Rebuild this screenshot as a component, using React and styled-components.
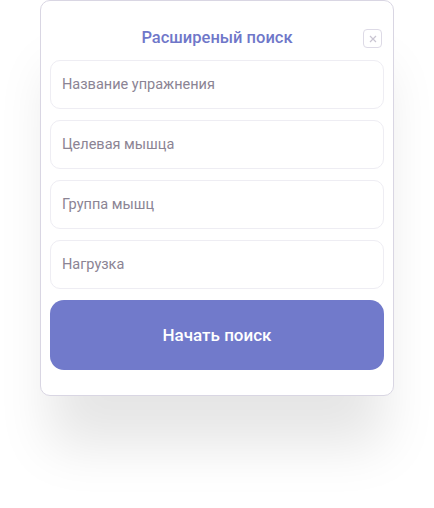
import React from 'react';
import styled, { createGlobalStyle } from 'styled-components';

const GlobalStyle = createGlobalStyle`
  html, body {
    margin: 0;
    padding: 0;
    background: #ffffff;
  }
  body {
    font-family: Roboto, 'Noto Sans', sans-serif;
  }
`;

const Page = styled.div`
  width: 434px;
  height: 508px;
  display: flex;
  justify-content: center;
  align-items: flex-start;
`;

const Card = styled.div`
  box-sizing: border-box;
  width: 354px;
  padding: 20px 9px 25px;
  background: #ffffff;
  border: 1px solid #d9d6e3;
  border-radius: 10px;
  box-shadow: 0 60px 50px -10px rgba(0, 0, 0, 0.1);
  display: flex;
  flex-direction: column;
  gap: 11px;
`;

const Header = styled.div`
  position: relative;
  display: flex;
  justify-content: center;
  align-items: center;
  height: 32px;
  margin-bottom: -4px;
`;

const Title = styled.h2`
  margin: 0;
  font-size: 16.5px;
  font-weight: 500;
  color: #6f77c9;
`;

const CloseButton = styled.button`
  position: absolute;
  right: 2px;
  top: 8px;
  width: 19px;
  height: 19px;
  padding: 0;
  box-sizing: border-box;
  border: 1.5px solid #dddae6;
  border-radius: 4px;
  background: #fff;
  display: flex;
  align-items: center;
  justify-content: center;
`;

const Field = styled.input`
  box-sizing: border-box;
  width: 100%;
  height: 49px;
  padding: 0 11px;
  border: 1px solid #eeedf3;
  border-radius: 10px;
  font-family: Roboto, 'Noto Sans', sans-serif;
  font-size: 14.5px;
  color: #8b8494;
  outline: none;

  &::placeholder {
    color: #8b8494;
  }
`;

const SearchButton = styled.button`
  height: 70px;
  border: none;
  border-radius: 14px;
  background: #717acb;
  color: #ffffff;
  font-family: Roboto, 'Noto Sans', sans-serif;
  font-size: 17px;
  font-weight: 500;
`;

const fields = ['Название упражнения', 'Целевая мышца', 'Группа мышц', 'Нагрузка'];

const App = () => {
  return (
    <>
      <GlobalStyle />
      <Page>
        <Card>
          <Header>
            <Title>Расширеный поиск</Title>
            <CloseButton aria-label='close'>
              <svg width='8' height='8' viewBox='0 0 8 8'>
                <path d='M1 1L7 7M7 1L1 7' stroke='#c9c5d2' strokeWidth='1.2' />
              </svg>
            </CloseButton>
          </Header>
          {fields.map((f) => (
            <Field key={f} placeholder={f} />
          ))}
          <SearchButton>Начать поиск</SearchButton>
        </Card>
      </Page>
    </>
  );
};

export default App;
